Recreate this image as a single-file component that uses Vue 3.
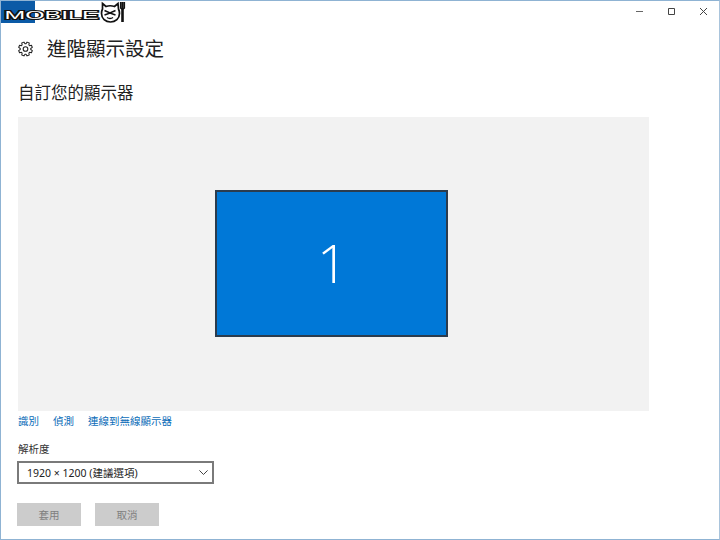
<template>
  <div class="window">
    <div class="titlebar">
      <div class="logo">
        <svg width="126" height="23" viewBox="0 0 126 23">
          <rect x="0" y="0" width="34" height="22" fill="#0b5aa6" />
          <text class="wordmark" x="3.500" y="17.500" textLength="94" lengthAdjust="spacingAndGlyphs">MOBILE</text>
          <path d="M101.500 2.500l3.500 3q4-1.500 8.500 0l3.500-3 .5 5.500q1 2 1 4.500c0 5-4 8.500-9 8.500s-9-3.500-9-8.500q0-2.500 1-4.500z" fill="#fff" stroke="#111" stroke-width="1.700" />
          <path d="M103.500 9.500l5.500 2.500 5.500-2.500M103.500 14l5.500-2 5.500 2M106 16.500q3 2 6 0" fill="none" stroke="#111" stroke-width="1.500" />
          <path d="M121.500 1v20" stroke="#111" stroke-width="2.600" />
          <path d="M119.500 1v6q2 2 4 0V1" fill="none" stroke="#111" stroke-width="1.200" />
        </svg>
      </div>
      <div class="controls">
        <svg width="7" height="7" viewBox="0 0 7 7"><path d="M0 3.500h7" stroke="#666" /></svg>
        <svg width="7" height="7" viewBox="0 0 7 7"><path d="M.5.500h6v6h-6z" fill="none" stroke="#444" /></svg>
        <svg width="7" height="7" viewBox="0 0 7 7"><path d="M0 0l7 7M7 0L0 7" stroke="#444" /></svg>
      </div>
    </div>

    <div class="page-head">
      <svg class="gear" width="15" height="16" viewBox="0 0 16 16">
        <circle cx="8" cy="8" r="2.500" fill="none" stroke="#222" stroke-width="1.100" />
        <path :d="gearPath" fill="none" stroke="#222" stroke-width="1.100" stroke-linejoin="round" />
      </svg>
      <h1>進階顯示設定</h1>
    </div>

    <h2>自訂您的顯示器</h2>

    <div class="preview">
      <div class="monitor"><span>1</span></div>
    </div>

    <div class="links">
      <a v-for="link in links" :key="link">{{ link }}</a>
    </div>

    <div class="field-label">解析度</div>
    <div class="select">
      <span>1920 × 1200 (建議選項)</span>
      <svg width="9" height="5" viewBox="0 0 9 5"><path d="M.4.400L4.500 4.500 8.600.400" fill="none" stroke="#444" /></svg>
    </div>

    <div class="actions">
      <button v-for="b in buttons" :key="b" disabled>{{ b }}</button>
    </div>
  </div>
</template>

<script setup>
const links = ['識別', '偵測', '連線到無線顯示器']
const buttons = ['套用', '取消']

// 8 teeth, alternating outer and inner radius
const gearPath = (() => {
  const pts = []
  for (let i = 0; i < 8; i++) {
    const a = (i * Math.PI) / 4 + Math.PI / 8
    for (const [r, d] of [[5.6, -0.3], [7.5, -0.17], [7.5, 0.17], [5.6, 0.3]]) {
      pts.push(`${(8 + r * Math.cos(a + d)).toFixed(2)} ${(8 + r * Math.sin(a + d)).toFixed(2)}`)
    }
  }
  return 'M' + pts.join('L') + 'Z'
})()
</script>

<style>
html, body {
  margin: 0;
  background: #fff;
}
</style>

<style scoped>
.window {
  width: 720px;
  height: 540px;
  box-sizing: border-box;
  overflow: hidden;
  background: #fff;
  border: 1px solid #8fb3d3;
  border-right-color: #a9c4dc;
  padding: 0 0 0 17px;
  font-family: "Noto Sans", "Noto Sans CJK TC", sans-serif;
  color: #222;
}

.titlebar {
  height: 22px;
  margin-left: -17px;
  display: flex;
  justify-content: space-between;
}

.logo {
  height: 22px;
}

.wordmark {
  font-family: "Liberation Sans", sans-serif;
  font-size: 11.500px;
  font-weight: 400;
  fill: #fff;
  stroke: #111;
  stroke-width: 2px;
  paint-order: stroke;
}

.controls {
  display: flex;
  align-items: center;
  gap: 25px;
  padding: 0 12px 2px 0;
  height: 20px;
}

.page-head {
  display: flex;
  align-items: center;
  gap: 14px;
  height: 26px;
  margin-top: 13px;
}

.gear {
  flex: none;
}

h1 {
  margin: 0;
  font-size: 19.500px;
  font-weight: 400;
  line-height: 26px;
}

h2 {
  margin: 19px 0 0;
  font-size: 16.500px;
  font-weight: 400;
  line-height: 24px;
}

.preview {
  margin-top: 12px;
  width: 631px;
  height: 294px;
  background: #f2f2f2;
  display: flex;
  align-items: center;
  justify-content: center;
}

.monitor {
  width: 233px;
  height: 147px;
  margin: 0 5px 1px 0;
  box-sizing: border-box;
  border: 2px solid #2b3c4e;
  background: #0078d7;
  color: #fff;
  font-family: "Open Sans", sans-serif;
  font-weight: 300;
  font-size: 54px;
  display: flex;
  align-items: center;
  justify-content: center;
}

.monitor span {
  margin: 0 0 4px 3px;
}

.links {
  display: flex;
  gap: 14px;
  margin-top: 1px;
  height: 18px;
  line-height: 18px;
  font-size: 10.500px;
  color: #0a6cb8;
}

.field-label {
  margin-top: 10px;
  font-size: 10.500px;
  line-height: 18px;
  color: #333;
}

.select {
  margin: 3px 0 0 -1px;
  width: 197px;
  height: 23px;
  box-sizing: border-box;
  border: 2px solid #7a7a7a;
  padding: 0 4px 0 8px;
  display: flex;
  align-items: center;
  justify-content: space-between;
  font-size: 10.500px;
  color: #222;
}

.actions {
  display: flex;
  gap: 14px;
  margin: 19px 0 0 -1px;
}

button {
  width: 64px;
  height: 23px;
  padding: 0;
  border: 0;
  background: #cccccc;
  color: #7f7f7f;
  font-family: inherit;
  font-size: 10.500px;
}
</style>
